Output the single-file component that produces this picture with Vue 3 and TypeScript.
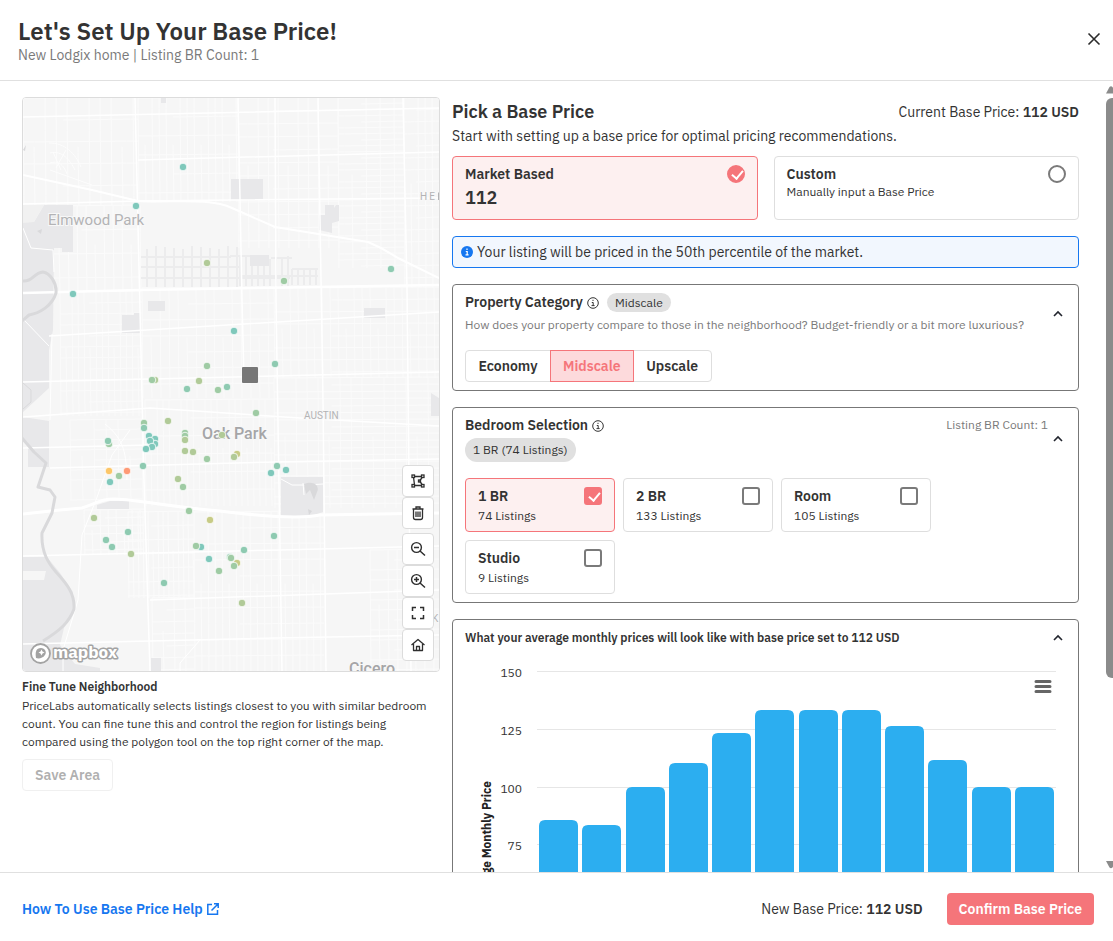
<script setup lang="ts">
import { ref } from 'vue'

interface Choice { name: string; count: string }
interface Zone { x: number; y: number; w: number; h: number; dx: number; dy: number }

const pricing = ref('market')
const category = ref('Midscale')
const categories = ['Economy', 'Midscale', 'Upscale']
const bedrooms: Choice[] = [
  { name: '1 BR', count: '74 Listings' },
  { name: '2 BR', count: '133 Listings' },
  { name: 'Room', count: '105 Listings' },
  { name: 'Studio', count: '9 Listings' },
]
const chosen = ref<string[]>(['1 BR'])

const monthly = [85.5, 83.5, 100, 110, 123, 133, 133, 133, 126, 111.5, 100, 100]
const ticks = [150, 125, 100, 75, 50]
const yOf = (v: number) => 19 + (150 - v) * 2.31
const bars = monthly.map((v, i) => ({ x: 74 + Math.round(i * 43.25), y: Math.round(yOf(v)) }))

const teal = '#7fc8bb'
const mint = '#8ecab1'
const green = '#9fcba4'
const lime = '#b1ca98'
const olive = '#c7cb86'
const dots: [number, number, string][] = [
  [183, 167, teal], [136, 206, teal], [207, 263, lime], [73, 294, teal], [234, 331, teal],
  [391, 269, mint], [284, 281, green], [275, 364, mint], [207, 366, green], [155, 380, lime],
  [152, 380, green], [199, 381, lime], [187, 389, mint], [218, 390, green], [227, 387, mint],
  [144, 423, green], [144, 428, mint], [168, 421, lime], [149, 436, teal], [155, 439, teal],
  [155, 444, teal], [150, 441, teal], [152, 447, teal], [146, 449, teal], [109, 444, green],
  [108, 441, mint], [185, 433, green], [185, 436, green], [185, 440, lime], [185, 451, lime],
  [193, 452, lime], [207, 459, green], [222, 435, lime], [237, 454, olive], [234, 457, lime],
  [143, 466, mint], [109, 471, '#fcc668'], [127, 471, '#fe9a76'], [119, 476, green], [110, 482, teal],
  [178, 479, lime], [183, 487, green], [189, 511, green], [210, 520, olive], [94, 518, lime],
  [128, 532, mint], [106, 540, mint], [112, 547, mint], [131, 554, lime], [201, 547, teal],
  [196, 546, green], [209, 559, teal], [219, 571, green], [230, 557, mint], [237, 563, olive],
  [231, 558, green], [234, 566, green], [164, 583, mint], [256, 413, green], [277, 466, mint],
  [286, 470, teal], [271, 473, teal], [274, 536, mint], [244, 550, mint], [242, 603, lime],
]

const zones: Zone[] = [
  { x: 23, y: 98, w: 115, h: 108, dx: 11, dy: 22 },
  { x: 50, y: 206, w: 90, h: 86, dx: 9, dy: 24 },
  { x: 138, y: 98, w: 100, h: 104, dx: 7, dy: 19 },
  { x: 238, y: 98, w: 100, h: 150, dx: 10, dy: 13 },
  { x: 338, y: 98, w: 66, h: 170, dx: 14, dy: 6 },
  { x: 404, y: 98, w: 35, h: 190, dx: 7, dy: 12 },
  { x: 60, y: 292, w: 82, h: 124, dx: 6, dy: 11 },
  { x: 142, y: 288, w: 132, h: 110, dx: 9, dy: 16 },
  { x: 274, y: 288, w: 165, h: 90, dx: 8, dy: 12 },
  { x: 70, y: 420, w: 72, h: 80, dx: 12, dy: 10 },
  { x: 145, y: 400, w: 130, h: 106, dx: 6, dy: 18 },
  { x: 274, y: 378, w: 165, h: 130, dx: 11, dy: 7 },
  { x: 84, y: 510, w: 60, h: 45, dx: 8, dy: 8 },
  { x: 128, y: 512, w: 66, h: 86, dx: 5, dy: 14 },
  { x: 194, y: 512, w: 130, h: 159, dx: 7, dy: 16 },
  { x: 370, y: 550, w: 69, h: 121, dx: 9, dy: 10 },
  { x: 152, y: 598, w: 42, h: 73, dx: 11, dy: 12 },
]
const streets = zones.map((z) => {
  let d = ''
  for (let x = z.x, i = 0; x <= z.x + z.w; x += z.dx, i++) {
    const cut = (i * 7) % 4 === 3 ? z.h * 0.45 : 0
    d += `M${x} ${z.y + cut}L${x + 1} ${z.y + z.h}`
  }
  for (let y = z.y, i = 0; y <= z.y + z.h; y += z.dy, i++) {
    const cut = (i * 5) % 3 === 2 ? z.w * 0.35 : 0
    d += `M${z.x + cut} ${y}L${z.x + z.w} ${y - 1}`
  }
  return d
}).join('')

let alleys = ''
for (let x = 147; x < 240; x += 9) alleys += `M${x} ${246 + (x % 4)}V287`
for (let x = 240; x < 292; x += 6) alleys += `M${x} ${255 + (x % 7)}V286`
for (let x = 292; x < 320; x += 6) alleys += `M${x} 269V285`
alleys += 'M141 257H231M141 267H240M141 278H290M230 256H250M271 258H292M240 276H318M292 269H318'
</script>

<template>
  <div class="dialog">
    <header class="top">
      <div>
        <h1>Let's Set Up Your Base Price!</h1>
        <p>New Lodgix home | Listing BR Count: 1</p>
      </div>
      <button class="plain close" type="button" aria-label="Close">
        <svg width="14" height="14" viewBox="0 0 14 14"><path d="M1.500 1.500L12.500 12.500M12.500 1.500L1.500 12.500" fill="none" stroke="#2b2b2b" stroke-width="1.600" /></svg>
      </button>
    </header>

    <div class="body">
      <main class="content">
        <section class="side">
          <div class="map">
            <svg class="canvas" viewBox="23 98 416 573" preserveAspectRatio="xMinYMin slice" role="img" aria-label="Map of listings">
              <rect x="23" y="98" width="416" height="573" fill="#f6f6f6" />
              <path :d="streets" fill="none" stroke="#fbfbfb" stroke-width="1" />
              <path :d="alleys" fill="none" stroke="#ececed" stroke-width="2" />
              <g fill="#e8e8ea">
                <path d="M23 222L34 222L44 205H73V252H62V248H54L53 330L49 350V388L23 412V288L36 294V312L23 320Z" />
                <path d="M23 205H44L34 222L23 223Z" fill="#f1f1f1" />
                <path d="M23 417L49 421V467H28V443L23 438Z" />
                <path d="M23 557L47 557L60 573L73 592L74 612L64 628L60 645L75 664L100 668V671H23Z" />
                <rect x="231" y="179" width="32" height="21" />
                <path d="M325 205H334V208L336 205H339V221L332 223V233L319 230V215H325Z" />
                <rect x="148" y="301" width="17" height="10" />
                <path d="M122 315H134V313H140V333H122Z" />
                <rect x="250" y="255" width="19" height="11" />
                <rect x="364" y="308" width="21" height="10" />
                <path d="M431 393L439 398V416H431Z" />
                <path d="M281 477L323 477V512L312 516H281Z" />
                <path d="M97 509V505L110 501L129 501V509Z" />
                <rect x="151" y="658" width="10" height="13" />
                <rect x="161" y="98" width="5" height="5" />
              </g>
              <path d="M23 571H46L44 580H23Z" fill="#f6f6f6" />
              <path d="M49 143C65 143 75 153 81 167M50 153C62 150 70 160 75 170M50 163C58 160 64 165 67 174M50 170L92 185M53 152L61 170M66 150L56 168" fill="none" stroke="#fdfdfd" />
              <g fill="none" stroke="#fff">
                <path stroke-width="1.500" d="M135 98C137 200 140 340 144 480L150 671M238 98L242 300L244 380M403 98L407 288L411 671M318 98L323 400L326 671M275 98L276 300L282 671" />
                <path stroke-width="1.500" d="M23 117L439 108M138 160L439 152M23 204L140 201L439 198M49 336L439 312M23 382L439 372M23 417L150 408L300 418L439 426M23 448L150 445M50 468L275 462L439 459M23 556L280 550L439 546M150 600L439 590M23 644L275 638L439 635" />
                <path stroke-width="2.500" d="M23 293L140 290L439 285" />
                <path stroke-width="3" d="M23 514L60 510L82 508C98 503 100 499 115 499C140 500 170 507 220 511C260 516 300 519 320 515L439 513" />
                <path stroke-width="2" d="M23 175L92 190L138 201C170 203 210 197 232 208L275 227L368 242C385 249 391 254 398 258L439 278" />
                <path d="M23 228L31 248L53 250L54 272M52 334L50 420M105 424C125 440 126 454 127 480M130 430L112 455L96 500L82 535L78 600L63 650V671M24 320L49 346M200 640L180 663V671" />
                <path d="M281 479L292 485H307L323 484M303 483L304 495" />
              </g>
              <g fill="none" stroke="#d9d9db" stroke-width="3" stroke-linejoin="round">
                <path d="M23 281C33 282 33 273 43 272C50 273 57 283 56 293C52 306 40 313 29 315L22 321" />
                <path d="M22 438L34 452L46 463L38 487L50 490L55 497L52 513L42 533C41 553 49 564 56 572C67 584 75 594 74 609C69 623 59 631 43 641" />
                <path stroke-width="1" d="M23 383L31 390V402L23 409" />
              </g>
              <path d="M304 484C314 480 320 486 317 492L314 500L310 490L306 494ZM308 509L312 511L309 515ZM37 231L42 229L41 234ZM23 150L26 145L25 151Z" fill="#d9d9db" />

              <g class="place">
                <text x="48" y="225" font-size="15">Elmwood Park</text>
                <text x="202" y="439" font-size="16" class="town">Oak Park</text>
                <text x="304" y="419" font-size="10">AUSTIN</text>
                <text x="420" y="200" font-size="10" class="wide">HE</text>
                <text x="349" y="674" font-size="16" class="town">Cicero</text>
                <text x="432" y="622" font-size="10">K</text>
              </g>
              <path d="M438.500 192.500V200" stroke="#b3b3b5" />

              <circle v-for="(d, i) in dots" :key="i" :cx="d[0]" :cy="d[1]" r="3.800" :fill="d[2]" stroke="#fff" stroke-width="0.800" />
              <rect x="242" y="367" width="16" height="16" rx="1" fill="#777" />

              <circle cx="40.500" cy="653.500" r="9.500" fill="#fff" stroke="#a3a3a3" stroke-width="1.800" />
              <path d="M36 658C35 652 36 648 41 648C45 648 47 652 45 655C43 658 39 659 36 658Z" fill="#a3a3a3" />
              <path d="M41.500 649.500L42.500 651.500L44.500 652.500L42.500 653.500L41.500 655.500L40.500 653.500L38.500 652.500L40.500 651.500Z" fill="#fff" />
              <text class="brand" x="53" y="658" font-size="17">mapbox</text>
            </svg>

            <div class="tools">
              <div class="stack">
                <button type="button" aria-label="Draw polygon">
                  <svg width="16" height="16" viewBox="0 0 16 16"><g fill="none" stroke="#2f2f2f" stroke-width="1.300"><path d="M4 3.500H12M4 12.500H12M3.500 4L4.500 12M12.500 4L9.500 8L12.500 12" /><g fill="#fff"><rect x="2" y="2" width="2.500" height="2.500" /><rect x="11.500" y="2" width="2.500" height="2.500" /><rect x="2" y="11.500" width="2.500" height="2.500" /><rect x="11.500" y="11.500" width="2.500" height="2.500" /><rect x="8.500" y="7" width="2" height="2" /></g></g></svg>
                </button>
                <button type="button" aria-label="Delete area">
                  <svg width="16" height="16" viewBox="0 0 16 16"><path d="M2.500 4H13.500M6 3.500V2H10V3.500M3.500 4.500V12.500Q3.500 14.500 5.500 14.500H10.500Q12.500 14.500 12.500 12.500V4.500M6 6.500V12M8 6.500V12M10 6.500V12" fill="none" stroke="#2f2f2f" stroke-width="1.300" /></svg>
                </button>
              </div>
              <div class="stack">
                <button type="button" aria-label="Zoom out">
                  <svg width="16" height="16" viewBox="0 0 16 16"><path d="M10 10L15 14.500M4 6.500H9" fill="none" stroke="#2f2f2f" stroke-width="1.500" /><circle cx="6.500" cy="6.500" r="4.900" fill="none" stroke="#2f2f2f" stroke-width="1.400" /></svg>
                </button>
                <button type="button" aria-label="Zoom in">
                  <svg width="16" height="16" viewBox="0 0 16 16"><path d="M10 10L15 14.500M4 6.500H9M6.500 4V9" fill="none" stroke="#2f2f2f" stroke-width="1.500" /><circle cx="6.500" cy="6.500" r="4.900" fill="none" stroke="#2f2f2f" stroke-width="1.400" /></svg>
                </button>
                <button type="button" aria-label="Fit to view">
                  <svg width="16" height="16" viewBox="0 0 16 16"><path d="M2.500 6V2.500H6M10 2.500H13.500V6M13.500 10V13.500H10M6 13.500H2.500V10" fill="none" stroke="#2f2f2f" stroke-width="1.500" /></svg>
                </button>
                <button type="button" aria-label="Home">
                  <svg width="16" height="16" viewBox="0 0 16 16"><path d="M1.500 8L8 2.500L14.500 8M3.500 7V13.500H12.500V7M6.500 13.500V9.500H9.500V13.500" fill="none" stroke="#2f2f2f" stroke-width="1.300" stroke-linejoin="round" /></svg>
                </button>
              </div>
            </div>
          </div>

          <h4>Fine Tune Neighborhood</h4>
          <p class="note">PriceLabs automatically selects listings closest to you with similar bedroom count. You can fine tune this and control the region for listings being compared using the polygon tool on the top right corner of the map.</p>
          <button class="save" type="button" disabled>Save Area</button>
        </section>

        <section class="settings">
          <div class="intro">
            <div class="intro-row">
              <h2>Pick a Base Price</h2>
              <span>Current Base Price: <b>112 USD</b></span>
            </div>
            <p>Start with setting up a base price for optimal pricing recommendations.</p>
          </div>

          <div class="modes">
            <label class="mode" :class="{ on: pricing === 'market' }">
              <span class="label"><b>Market Based</b><strong>112</strong></span>
              <input v-model="pricing" type="radio" name="pricing" value="market" />
            </label>
            <label class="mode" :class="{ on: pricing === 'custom' }">
              <span class="label"><b>Custom</b><small>Manually input a Base Price</small></span>
              <input v-model="pricing" type="radio" name="pricing" value="custom" />
            </label>
          </div>

          <div class="alert">
            <svg width="12" height="12" viewBox="0 0 12 12"><circle cx="6" cy="6" r="6" fill="#1677f0" /><path d="M6 2.500V4M4.800 5.500H6.200V8.800M4.500 8.900H7.600" fill="none" stroke="#fff" stroke-width="1.200" /></svg>
            <span>Your listing will be priced in the 50th percentile of the market.</span>
          </div>

          <section class="panel">
            <div class="panel-head">
              <div>
                <div class="title-row">
                  <h3>Property Category</h3>
                  <svg width="12" height="12" viewBox="0 0 12 12"><circle cx="6" cy="6" r="5.300" fill="none" stroke="#333" /><path d="M6 2.800V4M4.800 5.500H6.200V8.500M4.500 8.600H7.600" fill="none" stroke="#333" /></svg>
                  <span class="pill inline">Midscale</span>
                </div>
                <p class="hint">How does your property compare to those in the neighborhood? Budget-friendly or a bit more luxurious?</p>
              </div>
              <button class="plain" type="button" aria-label="Collapse property category">
                <svg width="16" height="16" viewBox="0 0 16 16"><path d="M4 10L8 6L12 10" fill="none" stroke="#22252e" stroke-width="1.600" /></svg>
              </button>
            </div>
            <div class="segments">
              <button v-for="c in categories" :key="c" type="button" :class="{ on: category === c }" @click="category = c">{{ c }}</button>
            </div>
          </section>

          <section class="panel">
            <div class="panel-head">
              <div>
                <div class="title-row">
                  <h3>Bedroom Selection</h3>
                  <svg width="12" height="12" viewBox="0 0 12 12"><circle cx="6" cy="6" r="5.300" fill="none" stroke="#333" /><path d="M6 2.800V4M4.800 5.500H6.200V8.500M4.500 8.600H7.600" fill="none" stroke="#333" /></svg>
                </div>
                <span class="pill">1 BR (74 Listings)</span>
              </div>
              <div class="head-end">
                <span class="hint count">Listing BR Count: 1</span>
                <button class="plain" type="button" aria-label="Collapse bedroom selection">
                  <svg width="16" height="16" viewBox="0 0 16 16"><path d="M4 10L8 6L12 10" fill="none" stroke="#22252e" stroke-width="1.600" /></svg>
                </button>
              </div>
            </div>
            <div class="rooms">
              <label v-for="b in bedrooms" :key="b.name" class="mode room" :class="{ on: chosen.includes(b.name) }">
                <span class="label"><b>{{ b.name }}</b><small>{{ b.count }}</small></span>
                <input v-model="chosen" type="checkbox" :value="b.name" />
              </label>
            </div>
          </section>

          <section class="panel">
            <div class="panel-head">
              <h4>What your average monthly prices will look like with base price set to 112 USD</h4>
              <button class="plain" type="button" aria-label="Collapse monthly prices">
                <svg width="16" height="16" viewBox="0 0 16 16"><path d="M4 10L8 6L12 10" fill="none" stroke="#22252e" stroke-width="1.600" /></svg>
              </button>
            </div>
            <svg class="chart" viewBox="0 0 601 280" role="img" aria-label="Average monthly price">
              <path v-for="t in ticks" :key="t" :d="`M72 ${Math.round(yOf(t)) + 0.5}H591`" stroke="#e6e6e6" />
              <text v-for="t in ticks" :key="'l' + t" x="57" :y="Math.round(yOf(t)) + 6" text-anchor="end" font-size="12" fill="#333">{{ t }}</text>
              <path v-for="(b, i) in bars" :key="'b' + i" :d="`M${b.x} 280V${b.y + 6}q0 -6 6 -6h27q6 0 6 6V280Z`" class="bar" />
              <text class="axis" transform="translate(26 129) rotate(-90)" text-anchor="end">Average Monthly Price</text>
              <path d="M571 29.500H585M571 34.500H585M571 39.500H585" stroke="#666" stroke-width="3" stroke-linecap="round" />
            </svg>
          </section>
        </section>
      </main>

      <div class="track" aria-hidden="true">
        <svg width="9" height="8" viewBox="0 0 9 8"><path d="M0 7.500L3.500 1Q5 -0.500 6.500 1L10 7.500Z" fill="#8b8b8b" /></svg>
        <span class="thumb"></span>
        <svg width="9" height="8" viewBox="0 0 9 8"><path d="M0 0L3.500 6.500Q5 8 6.500 6.500L10 0Z" fill="#8b8b8b" /></svg>
      </div>
    </div>

    <footer class="bottom">
      <a href="#help">How To Use Base Price Help
        <svg width="12" height="12" viewBox="0 0 12 12"><path d="M5 1.500H0.800V11.200H10.500V7M7 0.800H11.200V5M11 1L4.500 7.500" fill="none" stroke="#1677f0" stroke-width="1.500" /></svg>
      </a>
      <span class="new">New Base Price: <b>112 USD</b></span>
      <button class="confirm" type="button">Confirm Base Price</button>
    </footer>
  </div>
</template>

<style>
html, body { margin: 0; background: #fff; }
</style>

<style scoped>
.dialog {
  display: flex;
  flex-direction: column;
  height: 100vh;
  overflow: hidden;
  box-sizing: border-box;
  color: #333;
  font-family: "IBM Plex Sans", Roboto, sans-serif;
  font-size: 14px;
  line-height: 20px;
}
.dialog * { box-sizing: border-box; }
h1, h2, h3, h4, p { margin: 0; }
button, input { font: inherit; color: inherit; }
button { cursor: pointer; }
svg { display: block; flex: none; }
b, strong, h1, h2, h3, h4 { font-weight: 600; }
.plain { display: block; padding: 0; border: 0; background: none; }

.top {
  display: flex;
  align-items: center;
  justify-content: space-between;
  padding: 16px 12px 16px 18px;
  border-bottom: 1px solid #e0e0e0;
}
.top h1 { font-size: 24px; line-height: 30px; }
.top p { line-height: 18px; color: #7a7a7a; }
.close { margin-bottom: 2px; }

.body { flex: 1; display: flex; min-height: 0; overflow: hidden; }
.content {
  flex: 1;
  display: grid;
  grid-template-columns: 2fr 3fr;
  align-items: start;
  gap: 12px;
  min-width: 0;
  padding: 16px 27px 16px 22px;
}
.track { flex: none; display: flex; flex-direction: column; width: 7px; padding: 5px 0 3px; overflow: hidden; }
.thumb { width: 14px; height: 580px; margin: 4px 0 auto; border-radius: 6px; background: #8b8b8b; }

.map {
  position: relative;
  height: 575px;
  border: 1px solid #dcdcdc;
  border-radius: 4px;
  overflow: hidden;
}
.canvas { width: 100%; height: 100%; }
.place text {
  font-family: Roboto, sans-serif;
  fill: #b3b3b5;
  stroke: #f8f8f8;
  stroke-width: 2px;
  paint-order: stroke;
}
.place .town { font-weight: 500; fill: #a5a5a7; }
.place .wide { letter-spacing: 2px; }
.brand { font-weight: 700; fill: #fff; stroke: #a3a3a3; stroke-width: 3px; stroke-linejoin: round; paint-order: stroke; }
.tools { position: absolute; right: 5px; bottom: 10px; display: grid; gap: 4px; }
.tools button {
  display: flex;
  align-items: center;
  justify-content: center;
  width: 32px;
  height: 32px;
  padding: 0;
  border: 1px solid #dcdcdc;
  border-radius: 4px;
  background: #fff;
}
.side h4 { margin-top: 6px; font-size: 12px; line-height: 18px; }
.note { margin-top: 1px; font-size: 12px; line-height: 18px; }
.save {
  height: 32px;
  margin-top: 8px;
  padding: 0 12px;
  border: 1px solid #f0f0f0;
  border-radius: 4px;
  background: #fff;
  color: #b0b0b0;
  font-weight: 600;
}

.settings { display: grid; gap: 16px; min-width: 0; }
.intro { height: 43px; }
.intro-row { display: flex; align-items: center; justify-content: space-between; }
.intro h2 { font-size: 18px; line-height: 30px; }
.intro p { line-height: 18px; }

.modes { display: grid; grid-template-columns: 1fr 1fr; gap: 16px; }
.mode {
  display: flex;
  align-items: flex-start;
  justify-content: space-between;
  min-height: 64px;
  padding: 8px 12px;
  border: 1px solid #dedede;
  border-radius: 4px;
  cursor: pointer;
}
.mode.on { border-color: #f5757a; background: #fdf0f0; }
.label { display: grid; }
.label b { line-height: 18px; }
.label small { font-size: 12px; line-height: 18px; }
.label strong { padding-top: 4px; font-size: 18px; line-height: 22px; }
.mode input {
  position: relative;
  appearance: none;
  width: 18px;
  height: 18px;
  margin: 0;
  border: 2px solid #7a7a7a;
  border-radius: 50%;
  background: #fff;
}
.mode input[type="checkbox"] { border-radius: 3px; }
.mode input:checked { border-color: #f5757a; background: #f5757a; }
.mode input:checked::after {
  content: "";
  position: absolute;
  left: 5px;
  top: 1px;
  width: 5px;
  height: 9px;
  border: solid #fff;
  border-width: 0 2px 2px 0;
  transform: rotate(40deg);
}
.room { width: 150px; min-height: 54px; padding-bottom: 7px; }
.room .label { gap: 3px; }
.room small { line-height: 16px; }
.rooms { display: flex; flex-wrap: wrap; gap: 8px; margin-top: 16px; }

.alert {
  display: flex;
  align-items: center;
  gap: 4px;
  min-height: 32px;
  padding: 0 8px;
  border: 1px solid #1677f0;
  border-radius: 4px;
  background: #f2f7fe;
}

.panel { padding: 8px 12px; border: 1px solid #777; border-radius: 4px; }
.panel-head { display: flex; align-items: center; justify-content: space-between; }
.title-row { display: flex; align-items: center; gap: 4px; height: 19px; }
.title-row h3 { font-size: 14px; line-height: 19px; }
.pill {
  display: inline-block;
  margin-top: 3px;
  padding: 0 8px;
  border-radius: 12px;
  background: #e0e0e0;
  font-size: 12px;
  line-height: 24px;
}
.pill.inline { margin: 0 0 0 4px; line-height: 19px; }
.hint { font-size: 12px; line-height: 18px; color: #7a7a7a; }
p.hint { margin-top: 4px; }
.head-end { display: flex; align-self: stretch; align-items: center; gap: 2px; }
.count { align-self: flex-start; }
.segments { display: flex; margin-top: 16px; }
.segments button {
  min-width: 79px;
  height: 32px;
  padding: 0 12px;
  border: 1px solid #dedede;
  background: #fff;
  font-weight: 600;
}
.segments button + button { margin-left: -1px; }
.segments button:first-child { min-width: 86px; border-radius: 4px 0 0 4px; }
.segments button:last-child { border-radius: 0 4px 4px 0; }
.segments button.on { z-index: 1; border-color: #f5757a; background: #fddadc; color: #f5757a; }
.panel h4 { font-size: 12px; line-height: 20px; }

.chart { width: 100%; height: auto; margin-top: 4px; }
.bar { fill: #2caef0; }
.axis { font-size: 12px; font-weight: 700; fill: #222; }

.bottom {
  display: flex;
  align-items: center;
  padding: 20px 19px 16px 22px;
  border-top: 1px solid #e0e0e0;
}
.bottom a {
  display: flex;
  align-items: center;
  gap: 4px;
  margin-right: auto;
  color: #1677f0;
  font-weight: 600;
  text-decoration: none;
}
.confirm {
  min-width: 147px;
  height: 32px;
  margin-left: 24px;
  padding: 0 12px;
  border: 0;
  border-radius: 4px;
  background: #f5757a;
  color: #fff;
  font-weight: 600;
}
</style>
